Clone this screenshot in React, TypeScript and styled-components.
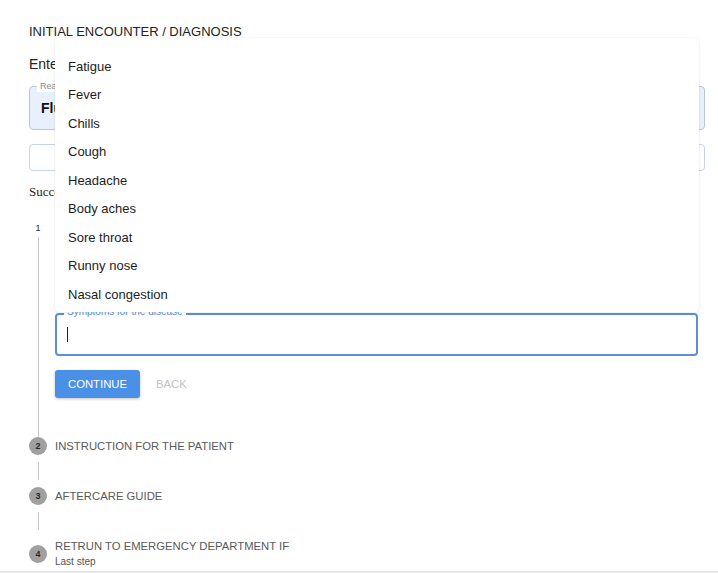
import React from 'react'
import styled, { createGlobalStyle } from 'styled-components'

const GlobalStyle = createGlobalStyle`
  html, body {
    margin: 0;
    padding: 0;
    background: #ffffff;
  }
  body {
    font-family: 'Liberation Sans', Arial, sans-serif;
    color: #222222;
  }
`

const symptoms = [
  'Fatigue',
  'Fever',
  'Chills',
  'Cough',
  'Headache',
  'Body aches',
  'Sore throat',
  'Runny nose',
  'Nasal congestion',
]

const Page = styled.div`
  padding: 22px 13px 2px 29px;
  border-bottom: 2px solid #e6e8ea;
  display: flex;
  flex-direction: column;
`

const Title = styled.div`
  font-size: 13px;
  line-height: 20px;
  color: #222;
`

const Prompt = styled.div`
  margin-top: 12px;
  font-size: 14px;
  line-height: 20px;
  color: #222;
`

const FilledField = styled.div`
  position: relative;
  margin-top: 12px;
  height: 44px;
  box-sizing: border-box;
  border: 1px solid #b9c6dc;
  border-radius: 4px;
  background: #e8f0fe;
  display: flex;
  align-items: center;
  padding: 0 11px;
  font-size: 14px;
  font-weight: 600;
  color: #111;
`

const FloatLabel = styled.span<{ $color?: string; $size?: number; $top?: number }>`
  position: absolute;
  top: ${(p) => p.$top ?? -7}px;
  left: 7px;
  padding: 0 3px;
  font-size: ${(p) => p.$size || 9}px;
  line-height: 12px;
  font-weight: 400;
  color: ${(p) => p.$color || '#8a8a8a'};
  background: #ffffff;
`

const OutlinedInput = styled.div`
  margin-top: 14px;
  height: 27px;
  box-sizing: border-box;
  border: 1px solid #c4d4ee;
  border-radius: 4px;
`

const Note = styled.div`
  margin-top: 11px;
  font-family: 'Liberation Serif', 'Times New Roman', serif;
  font-size: 13px;
  line-height: 20px;
  color: #222;
`

const Stepper = styled.div`
  margin-top: 17px;
  display: flex;
  flex-direction: column;
`

const StepRow = styled.div`
  display: flex;
  align-items: center;
  gap: 8px;
`

const StepIcon = styled.div<{ $active?: boolean }>`
  width: 18px;
  height: 18px;
  flex: none;
  border-radius: 50%;
  background: ${(p) => (p.$active ? 'transparent' : '#a0a0a0')};
  color: #2a2a2a;
  font-size: 9px;
  font-weight: ${(p) => (p.$active ? 400 : 700)};
  display: flex;
  align-items: center;
  justify-content: center;
`

const StepLabel = styled.div`
  font-size: 11.3px;
  line-height: 16px;
  color: #5a5a5a;
`

const SubLabel = styled.div`
  font-size: 10px;
  line-height: 14px;
  margin-top: 1px;
  color: #555;
`

const StepContent = styled.div`
  margin-left: 9px;
  padding: 6px 0 7px 16px;
  border-left: 1px solid #c8c8c8;
`

const ContentInner = styled.div`
  padding-top: 70px;
  padding-bottom: 32px;
`

const Connector = styled.div<{ $top: number; $bottom: number }>`
  margin: ${(p) => p.$top}px 0 ${(p) => p.$bottom}px 9px;
  height: 18px;
  border-left: 1px solid #c8c8c8;
`

const FieldWrap = styled.div`
  position: relative;
  margin-right: 7px;
`

const FocusedField = styled.div`
  position: relative;
  height: 43px;
  box-sizing: border-box;
  border: 2px solid #5b8fd8;
  border-radius: 4px;
  display: flex;
  align-items: center;
  padding: 0 10px;
`

const Caret = styled.span`
  width: 1px;
  height: 15px;
  background: #222;
`

const Popup = styled.ul`
  position: absolute;
  left: 0;
  right: -1px;
  bottom: calc(100% + 1px);
  height: 274px;
  box-sizing: border-box;
  margin: 0;
  padding: 14px 0 0;
  list-style: none;
  background: #ffffff;
  border-radius: 4px;
  box-shadow: 0 0 2px rgba(0, 0, 0, 0.08), 0 1px 3px rgba(0, 0, 0, 0.06);
  z-index: 2;
`

const Option = styled.li`
  height: 28.5px;
  display: flex;
  align-items: center;
  padding-left: 13px;
  font-size: 13px;
  color: #1c1c1c;
`

const Actions = styled.div`
  margin-top: 14px;
  display: flex;
  align-items: center;
  gap: 3px;
`

const Button = styled.button<{ $primary?: boolean }>`
  height: 28px;
  padding: 0 13px;
  border: none;
  border-radius: 3px;
  font-family: inherit;
  font-size: 11.3px;
  background: ${(p) => (p.$primary ? '#4a90e6' : 'transparent')};
  color: ${(p) => (p.$primary ? '#ffffff' : '#c2c2c2')};
  box-shadow: ${(p) => (p.$primary ? '0 1px 3px rgba(0,0,0,0.25)' : 'none')};
`

const LastStep = styled.div`
  display: flex;
  flex-direction: column;
`

export default function App() {
  return (
    <>
      <GlobalStyle />
      <Page>
        <Title>INITIAL ENCOUNTER / DIAGNOSIS</Title>
        <Prompt>Enter the reason for the visit</Prompt>
        <FilledField>
          <FloatLabel>Reason for visit</FloatLabel>
          Flu
        </FilledField>
        <OutlinedInput />
        <Note>Successfully saved</Note>
        <Stepper>
          <StepRow>
            <StepIcon $active>1</StepIcon>
            <StepLabel>SYMPTOMS</StepLabel>
          </StepRow>
          <StepContent>
            <ContentInner>
              <FieldWrap>
                <Popup>
                  {symptoms.map((s) => (
                    <Option key={s}>{s}</Option>
                  ))}
                </Popup>
                <FocusedField>
                  <FloatLabel $color="#5b8fd8" $size={10} $top={-9}>
                    Symptoms for the disease
                  </FloatLabel>
                  <Caret />
                </FocusedField>
              </FieldWrap>
              <Actions>
                <Button $primary>CONTINUE</Button>
                <Button>BACK</Button>
              </Actions>
            </ContentInner>
          </StepContent>
          <StepRow>
            <StepIcon>2</StepIcon>
            <StepLabel>INSTRUCTION FOR THE PATIENT</StepLabel>
          </StepRow>
          <Connector $top={7} $bottom={7} />
          <StepRow>
            <StepIcon>3</StepIcon>
            <StepLabel>AFTERCARE GUIDE</StepLabel>
          </StepRow>
          <Connector $top={7} $bottom={8} />
          <StepRow>
            <StepIcon>4</StepIcon>
            <LastStep>
              <StepLabel>RETRUN TO EMERGENCY DEPARTMENT IF</StepLabel>
              <SubLabel>Last step</SubLabel>
            </LastStep>
          </StepRow>
        </Stepper>
      </Page>
    </>
  )
}
